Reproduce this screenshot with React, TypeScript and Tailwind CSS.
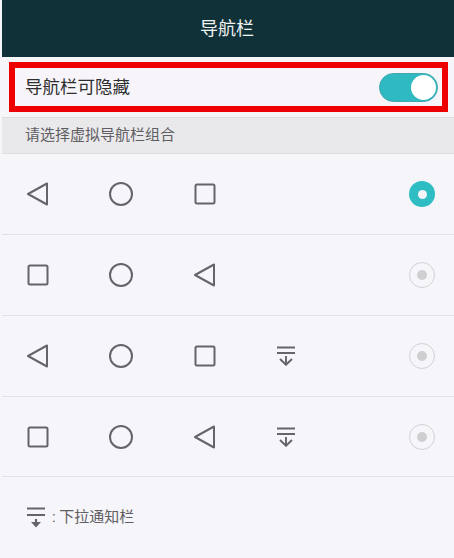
const FONT = "font-['Roboto','Noto_Sans_CJK_SC',sans-serif]";

function Back() {
  return (
    <svg width="24" height="26" viewBox="0 0 24 26" fill="none" stroke="#666469" strokeWidth="2" strokeLinejoin="round">
      <path d="M2 13 L21 2.5 V23.5 Z" />
    </svg>
  );
}
function Home() {
  return (
    <svg width="24" height="24" viewBox="0 0 24 24" fill="none" stroke="#666469" strokeWidth="2">
      <circle cx="12" cy="12" r="11" />
    </svg>
  );
}
function Recent() {
  return (
    <svg width="22" height="22" viewBox="0 0 22 22" fill="none" stroke="#666469" strokeWidth="2" strokeLinejoin="round">
      <rect x="1.5" y="1.5" width="19" height="19" rx="1.5" />
    </svg>
  );
}
function Pull() {
  return (
    <svg width="18" height="20" viewBox="0 0 18 20" fill="none" stroke="#666469" strokeWidth="1.9">
      <path d="M0 1.5 H18 M0 7 H18 M9 10 V18.5 M3 13 L9 18.8 L15 13" />
    </svg>
  );
}
function PullLegend() {
  return (
    <svg width="18" height="21" viewBox="0 0 18 21" fill="none" stroke="#666469" strokeWidth="2.2">
      <path d="M0 1.5 H18 M0 8 H18 M9 12 V19" />
      <path d="M4 15 H14 L9 20.5 Z" fill="#666469" stroke="none" />
    </svg>
  );
}
function Radio({ on }: { on?: boolean }) {
  return on ? (
    <div className="w-[26px] h-[26px] rounded-full bg-[#2fbdc4] flex items-center justify-center">
      <div className="w-[9px] h-[9px] rounded-full bg-[#f6f5f9]" />
    </div>
  ) : (
    <div className="w-[26px] h-[26px] rounded-full border border-[#d2d1d4] flex items-center justify-center">
      <div className="w-[10px] h-[10px] rounded-full bg-[#cfced1]" />
    </div>
  );
}

function Slot({ children }: { children?: React.ReactNode }) {
  return <div className="w-[83.5px] flex items-center justify-center">{children}</div>;
}

function Row({ icons, on, pull, short }: { icons: React.ReactNode[]; on?: boolean; pull?: boolean; short?: boolean }) {
  return (
    <div className={`${short ? "h-[80px]" : "h-[81px]"} shrink-0 pr-[19px] flex items-center border-b border-[#e2e1e5]`}>
      <div className="flex flex-1 items-center -ml-[6px]">
        {icons.map((ic, i) => (
          <Slot key={i}>{ic}</Slot>
        ))}
        {pull && (
          <Slot>
            <div className="-ml-[4px]">
              <Pull />
            </div>
          </Slot>
        )}
      </div>
      <Radio on={on} />
    </div>
  );
}

export default function App() {
  return (
    <div className={`w-[454px] h-[558px] overflow-hidden bg-[#f6f5f9] pl-[2px] flex flex-col ${FONT}`}>
      <div className="h-[57px] shrink-0 bg-[#113138] flex items-center justify-center pr-[2px] text-[18px] text-[#f0f3f3]">
        导航栏
      </div>
      <div className="h-[50px] shrink-0 mt-[5px] ml-[7px] mr-[6px] border-[6px] border-[#ee0000] bg-[#f7f5f9] flex items-center justify-between pl-[10px] pr-[4px]">
        <span className="text-[17.5px] text-[#2e2e30]">导航栏可隐藏</span>
        <div className="w-[59px] h-[29px] rounded-full bg-[#2fb9c0] border border-[#3fa9ae] flex items-center justify-end pr-[1px]">
          <div className="w-[25px] h-[25px] rounded-full bg-white" />
        </div>
      </div>
      <div className="h-[37px] shrink-0 mt-[5px] pl-[23px] bg-[#e9e8eb] border-y border-[#dededf] flex items-center text-[15px] text-[#5f5e62]">
        请选择虚拟导航栏组合
      </div>
      <Row icons={[<Back />, <Home />, <Recent />]} on />
      <Row icons={[<Recent />, <Home />, <Back />]} />
      <Row icons={[<Back />, <Home />, <Recent />]} pull />
      <Row icons={[<Recent />, <Home />, <Back />]} pull short />
      <div className="flex items-center h-[81px] pl-[25px] gap-[7px] text-[15px] text-[#5f5e62]">
        <PullLegend />
        <span>: 下拉通知栏</span>
      </div>
    </div>
  );
}
